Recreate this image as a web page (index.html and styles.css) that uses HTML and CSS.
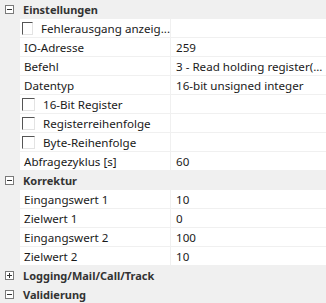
FILE: index.html
```html
<!DOCTYPE html>
<html lang="de">
  <head>
    <meta charset="UTF-8" />
    <title>Eigenschaften</title>
    <link rel="stylesheet" href="styles.css">
  </head>
  <body>
    <div class="grid">
      <div class="cat">
        <span class="toggle minus"></span>
        <span class="cat-name">Einstellungen</span>
      </div>
      <div class="row">
        <div class="gutter"></div>
        <div class="name check"><span class="box"></span>Fehlerausgang anzeig...</div>
        <div class="value"></div>
      </div>
      <div class="row">
        <div class="gutter"></div>
        <div class="name">IO-Adresse</div>
        <div class="value">259</div>
      </div>
      <div class="row">
        <div class="gutter"></div>
        <div class="name">Befehl</div>
        <div class="value">3 - Read holding register(...</div>
      </div>
      <div class="row">
        <div class="gutter"></div>
        <div class="name">Datentyp</div>
        <div class="value">16-bit unsigned integer</div>
      </div>
      <div class="row">
        <div class="gutter"></div>
        <div class="name check"><span class="box"></span>16-Bit Register</div>
        <div class="value"></div>
      </div>
      <div class="row">
        <div class="gutter"></div>
        <div class="name check"><span class="box"></span>Registerreihenfolge</div>
        <div class="value"></div>
      </div>
      <div class="row">
        <div class="gutter"></div>
        <div class="name check"><span class="box"></span>Byte-Reihenfolge</div>
        <div class="value"></div>
      </div>
      <div class="row">
        <div class="gutter"></div>
        <div class="name">Abfragezyklus [s]</div>
        <div class="value">60</div>
      </div>

      <div class="cat">
        <span class="toggle minus"></span>
        <span class="cat-name">Korrektur</span>
      </div>
      <div class="row">
        <div class="gutter"></div>
        <div class="name">Eingangswert 1</div>
        <div class="value">10</div>
      </div>
      <div class="row">
        <div class="gutter"></div>
        <div class="name">Zielwert 1</div>
        <div class="value">0</div>
      </div>
      <div class="row">
        <div class="gutter"></div>
        <div class="name">Eingangswert 2</div>
        <div class="value">100</div>
      </div>
      <div class="row">
        <div class="gutter"></div>
        <div class="name">Zielwert 2</div>
        <div class="value">10</div>
      </div>

      <div class="cat">
        <span class="toggle plus"></span>
        <span class="cat-name">Logging/Mail/Call/Track</span>
      </div>
      <div class="cat">
        <span class="toggle minus"></span>
        <span class="cat-name">Validierung</span>
      </div>
    </div>
  </body>
</html>
```

FILE: styles.css
```css
body {
  margin: 0;
  padding: 0;
  background-color: #f0f0f0;
  font-family: "Noto Sans", Arial, sans-serif;
  font-size: 11.6px;
  color: #1a1a1a;
}
.grid {
  display: flex;
  flex-direction: column;
}
.cat {
  display: flex;
  align-items: center;
  height: 19px;
  background-color: #f0f0f0;
}
.cat-name {
  font-weight: bold;
  font-size: 11px;
  color: #333;
  margin-left: 9px;
}
.toggle {
  position: relative;
  width: 9px;
  height: 9px;
  margin-left: 5px;
  border: 1px solid #7a7a7a;
  box-sizing: border-box;
  background-color: #fff;
}
.toggle::before {
  content: "";
  position: absolute;
  left: 1px;
  top: 3px;
  width: 5px;
  height: 1px;
  background-color: #333;
}
.plus::after {
  content: "";
  position: absolute;
  left: 3px;
  top: 1px;
  width: 1px;
  height: 5px;
  background-color: #333;
}
.row {
  display: grid;
  grid-template-columns: 20px 151px 1fr;
  height: 19px;
}
.gutter {
  background-color: #f0f0f0;
}
.name,
.value {
  display: flex;
  align-items: center;
  background-color: #fff;
  border-bottom: 1px solid #f0f0f0;
  white-space: nowrap;
}
.name {
  padding-left: 4px;
  border-right: 1px solid #f0f0f0;
}
.value {
  padding-left: 5px;
}
.check {
  padding-left: 2px;
}
.box {
  width: 13px;
  height: 13px;
  box-sizing: border-box;
  border-left: 1px solid #555;
  border-top: 1px solid #555;
  border-right: 1px solid #e3e3e3;
  border-bottom: 1px solid #e3e3e3;
  margin-right: 8px;
}
```
